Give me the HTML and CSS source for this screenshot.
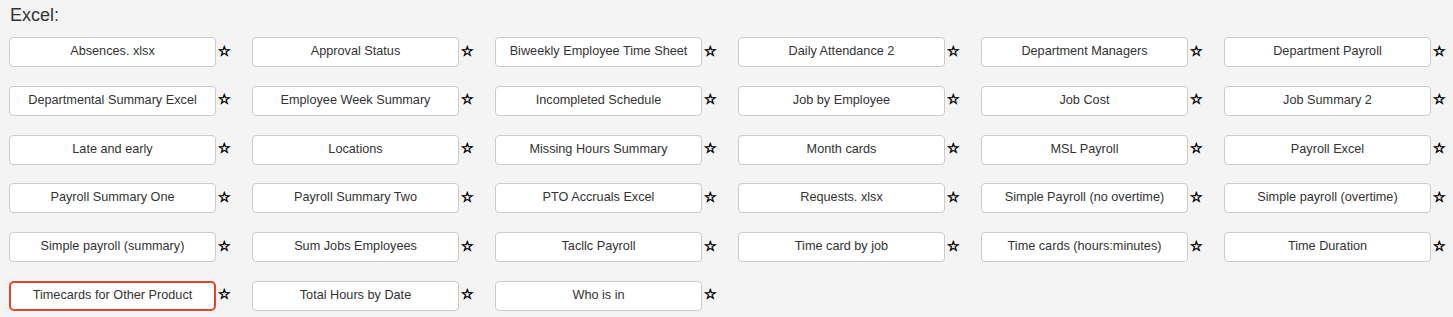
FILE: index.html
```html
<!DOCTYPE html>
<html lang="en">
<head>
  <meta charset="UTF-8" />
  <title>Excel reports</title>
  <link rel="stylesheet" href="styles.css">
</head>
<body>
  <div class="section">
    <h3 class="section-title">Excel:</h3>
    <div class="report-grid">
      <div class="report"><button class="report-btn">Absences. xlsx</button><span class="fav">☆</span></div>
      <div class="report"><button class="report-btn">Approval Status</button><span class="fav">☆</span></div>
      <div class="report"><button class="report-btn">Biweekly Employee Time Sheet</button><span class="fav">☆</span></div>
      <div class="report"><button class="report-btn">Daily Attendance 2</button><span class="fav">☆</span></div>
      <div class="report"><button class="report-btn">Department Managers</button><span class="fav">☆</span></div>
      <div class="report"><button class="report-btn">Department Payroll</button><span class="fav">☆</span></div>

      <div class="report"><button class="report-btn">Departmental Summary Excel</button><span class="fav">☆</span></div>
      <div class="report"><button class="report-btn">Employee Week Summary</button><span class="fav">☆</span></div>
      <div class="report"><button class="report-btn">Incompleted Schedule</button><span class="fav">☆</span></div>
      <div class="report"><button class="report-btn">Job by Employee</button><span class="fav">☆</span></div>
      <div class="report"><button class="report-btn">Job Cost</button><span class="fav">☆</span></div>
      <div class="report"><button class="report-btn">Job Summary 2</button><span class="fav">☆</span></div>

      <div class="report"><button class="report-btn">Late and early</button><span class="fav">☆</span></div>
      <div class="report"><button class="report-btn">Locations</button><span class="fav">☆</span></div>
      <div class="report"><button class="report-btn">Missing Hours Summary</button><span class="fav">☆</span></div>
      <div class="report"><button class="report-btn">Month cards</button><span class="fav">☆</span></div>
      <div class="report"><button class="report-btn">MSL Payroll</button><span class="fav">☆</span></div>
      <div class="report"><button class="report-btn">Payroll Excel</button><span class="fav">☆</span></div>

      <div class="report"><button class="report-btn">Payroll Summary One</button><span class="fav">☆</span></div>
      <div class="report"><button class="report-btn">Payroll Summary Two</button><span class="fav">☆</span></div>
      <div class="report"><button class="report-btn">PTO Accruals Excel</button><span class="fav">☆</span></div>
      <div class="report"><button class="report-btn">Requests. xlsx</button><span class="fav">☆</span></div>
      <div class="report"><button class="report-btn">Simple Payroll (no overtime)</button><span class="fav">☆</span></div>
      <div class="report"><button class="report-btn">Simple payroll (overtime)</button><span class="fav">☆</span></div>

      <div class="report"><button class="report-btn">Simple payroll (summary)</button><span class="fav">☆</span></div>
      <div class="report"><button class="report-btn">Sum Jobs Employees</button><span class="fav">☆</span></div>
      <div class="report"><button class="report-btn">Tacllc Payroll</button><span class="fav">☆</span></div>
      <div class="report"><button class="report-btn">Time card by job</button><span class="fav">☆</span></div>
      <div class="report"><button class="report-btn">Time cards (hours:minutes)</button><span class="fav">☆</span></div>
      <div class="report"><button class="report-btn">Time Duration</button><span class="fav">☆</span></div>

      <div class="report"><button class="report-btn active">Timecards for Other Product</button><span class="fav">☆</span></div>
      <div class="report"><button class="report-btn">Total Hours by Date</button><span class="fav">☆</span></div>
      <div class="report"><button class="report-btn">Who is in</button><span class="fav">☆</span></div>
    </div>
  </div>
</body>
</html>
```

FILE: styles.css
```css
body {
  margin: 0;
  background: #f4f4f4;
  font-family: 'Liberation Sans', Arial, sans-serif;
  color: #333;
}

.section {
  padding: 0 0 0 9px;
}

.section-title {
  margin: 0;
  padding: 4px 0 0 1px;
  height: 37px;
  box-sizing: border-box;
  font-size: 18px;
  font-weight: normal;
  line-height: 22px;
  color: #333;
}

.report-grid {
  display: grid;
  grid-template-columns: repeat(6, 243px);
  row-gap: 18.8px;
}

.report {
  display: flex;
  align-items: center;
}

.report-btn {
  width: 207px;
  height: 30px;
  padding: 0 6px 2px;
  background: #fff;
  border: 1px solid #ccc;
  border-radius: 4px;
  font-family: 'Liberation Sans', Arial, sans-serif;
  font-size: 12.7px;
  color: #333;
  cursor: pointer;
  white-space: nowrap;
}

.report-btn.active {
  border: 2px solid #e5432a;
  border-radius: 5px;
}

.fav {
  margin-left: 2px;
  margin-top: -3px;
  font-family: 'DejaVu Sans', sans-serif;
  font-size: 14px;
  line-height: 14px;
  color: #000;
  -webkit-text-stroke: 0.7px #000;
}
```
